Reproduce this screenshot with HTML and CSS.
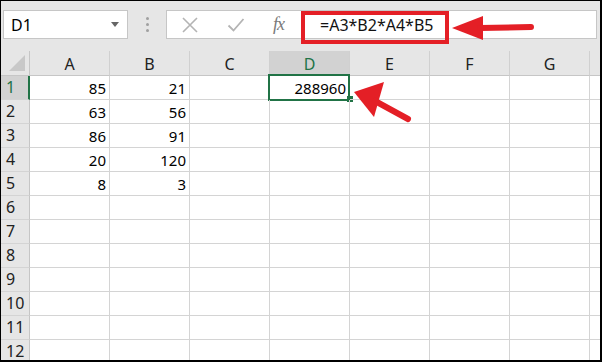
FILE: index.html
```html
<!DOCTYPE html>
<html lang="en">
<head>
  <meta charset="UTF-8">
  <title>Sheet1 - Excel</title>
  <link rel="stylesheet" href="styles.css">
</head>
<body>
  <div class="app">
    <!-- name box + formula bar -->
    <div class="toolbar">
      <div class="namebox">
        <span>D1</span>
        <span class="caret"></span>
      </div>
      <div class="grip"><i></i><i></i><i></i></div>
      <div class="formula-bar">
        <svg class="tool" width="18" height="18" viewBox="0 0 18 18">
          <path d="M2 2 L16 16 M16 2 L2 16" stroke="#b4b4b4" stroke-width="1.6" fill="none"/>
        </svg>
        <svg class="tool" width="18" height="18" viewBox="0 0 18 18">
          <path d="M1.5 9.5 L6.5 14.5 L16.5 3" stroke="#b4b4b4" stroke-width="1.8" fill="none"/>
        </svg>
        <span class="fx">fx</span>
        <div class="formula">=A3*B2*A4*B5</div>
        <div class="callout"></div>
        <svg class="arrow-bar" width="84" height="30" viewBox="0 0 84 30">
          <polygon points="0,12 31,0 31,24" fill="#e41f26"/>
          <line x1="28" y1="12" x2="79" y2="11" stroke="#e41f26" stroke-width="6" stroke-linecap="round"/>
        </svg>
      </div>
    </div>

    <!-- worksheet -->
    <div class="sheet">
      <div class="row head">
        <div class="rh corner">
          <svg width="17" height="17" viewBox="0 0 17 17"><polygon points="0,16 16,16 16,0" fill="#c8c8c8"/></svg>
        </div>
        <div class="ch">A</div><div class="ch">B</div><div class="ch">C</div>
        <div class="ch sel">D</div><div class="ch">E</div><div class="ch">F</div>
        <div class="ch">G</div><div class="ch"></div>
      </div>
      <div class="row">
        <div class="rh sel">1</div>
        <div class="c">85</div><div class="c">21</div><div class="c"></div>
        <div class="c active">288960<span class="handle"></span></div>
        <div class="c"></div><div class="c"></div><div class="c"></div><div class="c"></div>
      </div>
      <div class="row">
        <div class="rh">2</div>
        <div class="c">63</div><div class="c">56</div><div class="c"></div><div class="c"></div>
        <div class="c"></div><div class="c"></div><div class="c"></div><div class="c"></div>
      </div>
      <div class="row">
        <div class="rh">3</div>
        <div class="c">86</div><div class="c">91</div><div class="c"></div><div class="c"></div>
        <div class="c"></div><div class="c"></div><div class="c"></div><div class="c"></div>
      </div>
      <div class="row">
        <div class="rh">4</div>
        <div class="c">20</div><div class="c">120</div><div class="c"></div><div class="c"></div>
        <div class="c"></div><div class="c"></div><div class="c"></div><div class="c"></div>
      </div>
      <div class="row">
        <div class="rh">5</div>
        <div class="c">8</div><div class="c">3</div><div class="c"></div><div class="c"></div>
        <div class="c"></div><div class="c"></div><div class="c"></div><div class="c"></div>
      </div>
      <div class="row"><div class="rh">6</div><div class="c"></div><div class="c"></div><div class="c"></div><div class="c"></div><div class="c"></div><div class="c"></div><div class="c"></div><div class="c"></div></div>
      <div class="row"><div class="rh">7</div><div class="c"></div><div class="c"></div><div class="c"></div><div class="c"></div><div class="c"></div><div class="c"></div><div class="c"></div><div class="c"></div></div>
      <div class="row"><div class="rh">8</div><div class="c"></div><div class="c"></div><div class="c"></div><div class="c"></div><div class="c"></div><div class="c"></div><div class="c"></div><div class="c"></div></div>
      <div class="row"><div class="rh">9</div><div class="c"></div><div class="c"></div><div class="c"></div><div class="c"></div><div class="c"></div><div class="c"></div><div class="c"></div><div class="c"></div></div>
      <div class="row"><div class="rh">10</div><div class="c"></div><div class="c"></div><div class="c"></div><div class="c"></div><div class="c"></div><div class="c"></div><div class="c"></div><div class="c"></div></div>
      <div class="row"><div class="rh">11</div><div class="c"></div><div class="c"></div><div class="c"></div><div class="c"></div><div class="c"></div><div class="c"></div><div class="c"></div><div class="c"></div></div>
      <div class="row"><div class="rh">12</div><div class="c"></div><div class="c"></div><div class="c"></div><div class="c"></div><div class="c"></div><div class="c"></div><div class="c"></div><div class="c"></div></div>

      <!-- annotation arrow pointing at D1 -->
      <svg class="arrow-cell" width="62" height="44" viewBox="0 0 62 44">
        <polygon points="3,11 33,1 23,36" fill="#e41f26"/>
        <line x1="24" y1="20" x2="57" y2="38" stroke="#e41f26" stroke-width="6" stroke-linecap="round"/>
      </svg>
    </div>
  </div>
</body>
</html>
```

FILE: styles.css
```css
* {
  box-sizing: border-box;
}
body {
  margin: 0;
  font-family: 'Noto Sans', 'Liberation Sans', sans-serif;
  color: #000;
}
.app {
  width: 602px;
  height: 362px;
  border: 1px solid #000;
  border-right-width: 2px;
  border-bottom-width: 2px;
  background-color: #e6e6e6;
  overflow: hidden;
}
.toolbar {
  height: 50px;
  padding: 9px 3px 0 2px;
  display: flex;
  align-items: flex-start;
}
.namebox {
  width: 125px;
  height: 29px;
  background-color: #fff;
  border: 1px solid #c6c6c6;
  display: flex;
  align-items: center;
  justify-content: space-between;
  padding: 0 8px 0 7px;
  font-size: 16px;
}
.caret {
  width: 0;
  height: 0;
  border-left: 4px solid transparent;
  border-right: 4px solid transparent;
  border-top: 5px solid #666;
}
.grip {
  width: 38px;
  height: 29px;
  display: flex;
  flex-direction: column;
  align-items: center;
  justify-content: center;
  gap: 3px;
}
.grip i {
  width: 3px;
  height: 3px;
  border-radius: 50%;
  background-color: #a0a0a0;
}
.formula-bar {
  flex: 1;
  height: 29px;
  background-color: #fff;
  border: 1px solid #c6c6c6;
  display: flex;
  align-items: center;
  padding-left: 14px;
  position: relative;
}
.tool {
  margin-right: 28px;
}
.fx {
  font-family: 'Liberation Serif', serif;
  font-style: italic;
  font-size: 18px;
  color: #7a7a7a;
  letter-spacing: -1px;
}
.formula {
  margin-left: 36px;
  font-size: 16px;
  color: #111;
}
.callout {
  position: absolute;
  left: 134px;
  top: 0;
  width: 148px;
  height: 33px;
  border: 4px solid #e41f26;
}
.arrow-bar {
  position: absolute;
  left: 285px;
  top: 5px;
}
.sheet {
  position: relative;
  background-color: #fff;
}
.row {
  display: flex;
  height: 24px;
}
.row.head {
  height: 25px;
  background-color: #e6e6e6;
}
.rh {
  width: 29px;
  flex: none;
  background-color: #e6e6e6;
  border-right: 1px solid #c6c6c6;
  border-bottom: 1px solid #d4d4d4;
  font-size: 16px;
  color: #222;
  padding-left: 5px;
  line-height: 23px;
}
.rh.sel {
  background-color: #d2d2d2;
  border-right: 2px solid #217346;
  color: #217346;
}
.corner {
  display: flex;
  align-items: flex-end;
  justify-content: flex-end;
  padding: 0 3px 3px 0;
  border-bottom-color: #c6c6c6;
}
.ch {
  width: 80px;
  flex: none;
  border-right: 1px solid #d0d0d0;
  border-bottom: 1px solid #c6c6c6;
  text-align: center;
  font-size: 16px;
  line-height: 26px;
  color: #222;
}
.ch.sel {
  background-color: #d2d2d2;
  color: #217346;
}
.c {
  width: 80px;
  flex: none;
  border-right: 1px solid #d4d4d4;
  border-bottom: 1px solid #d4d4d4;
  text-align: right;
  padding-right: 3px;
  font-size: 15px;
  line-height: 24px;
  position: relative;
}
.c.active::before {
  content: "";
  position: absolute;
  left: -2px;
  top: -2px;
  right: -1px;
  bottom: -2px;
  border: 2px solid #217346;
}
.handle {
  position: absolute;
  right: -4px;
  bottom: -3px;
  width: 6px;
  height: 6px;
  background-color: #217346;
}
.arrow-cell {
  position: absolute;
  left: 350px;
  top: 30px;
}
```
